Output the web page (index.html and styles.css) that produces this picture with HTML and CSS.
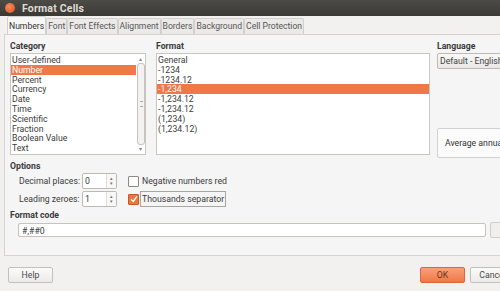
FILE: index.html
```html
<!DOCTYPE html>
<html lang="en">
<head>
    <meta charset="UTF-8">
    <title>Format Cells</title>
    <link rel="stylesheet" href="styles.css">
</head>
<body>
    <div class="titlebar">
        <span class="close-dot"></span>
        <span class="title">Format Cells</span>
    </div>
    <div class="window">
        <div class="tabs">
            <div class="tab active">Numbers</div>
            <div class="tab">Font</div>
            <div class="tab">Font Effects</div>
            <div class="tab">Alignment</div>
            <div class="tab">Borders</div>
            <div class="tab">Background</div>
            <div class="tab">Cell Protection</div>
        </div>
        <div class="panel">
            <div class="top-row">
                <div class="col col-category">
                    <div class="section-label">Category</div>
                    <div class="listbox">
                        <div class="items">
                            <div class="item">User-defined</div>
                            <div class="item selected">Number</div>
                            <div class="item">Percent</div>
                            <div class="item">Currency</div>
                            <div class="item">Date</div>
                            <div class="item">Time</div>
                            <div class="item">Scientific</div>
                            <div class="item">Fraction</div>
                            <div class="item">Boolean Value</div>
                            <div class="item">Text</div>
                        </div>
                        <div class="scrollbar">
                            <span class="arrow">&#9652;</span>
                            <div class="thumb"><span class="grip"></span></div>
                            <span class="arrow">&#9662;</span>
                        </div>
                    </div>
                </div>
                <div class="col col-format">
                    <div class="section-label">Format</div>
                    <div class="listbox">
                        <div class="items">
                            <div class="item">General</div>
                            <div class="item">-1234</div>
                            <div class="item">-1234.12</div>
                            <div class="item selected">-1,234</div>
                            <div class="item">-1,234.12</div>
                            <div class="item">-1,234.12</div>
                            <div class="item">(1,234)</div>
                            <div class="item">(1,234.12)</div>
                        </div>
                    </div>
                </div>
                <div class="col col-language">
                    <div class="section-label">Language</div>
                    <div class="dropdown">Default - English (USA)</div>
                    <div class="preview">Average annual</div>
                </div>
            </div>

            <div class="section-label options-label">Options</div>
            <div class="option-row">
                <span class="opt-label">Decimal places:</span>
                <div class="spin">
                    <span class="spin-value">0</span>
                    <span class="spin-btns"><span>&#9652;</span><span>&#9662;</span></span>
                </div>
                <span class="check"></span>
                <span class="check-text">Negative numbers red</span>
            </div>
            <div class="option-row">
                <span class="opt-label">Leading zeroes:</span>
                <div class="spin">
                    <span class="spin-value">1</span>
                    <span class="spin-btns"><span>&#9652;</span><span>&#9662;</span></span>
                </div>
                <span class="check checked">
                    <svg width="8" height="8" viewBox="0 0 8 8"><path d="M1 4.2 L3.2 6.4 L7 1.4" fill="none" stroke="#fff" stroke-width="1.4"/></svg>
                </span>
                <span class="check-text focused">Thousands separator</span>
            </div>

            <div class="section-label code-label">Format code</div>
            <div class="code-row">
                <div class="code-input">#,##0</div>
                <div class="code-btn"></div>
            </div>
        </div>
        <div class="footer">
            <button class="btn">Help</button>
            <div class="footer-right">
                <button class="btn btn-ok">OK</button>
                <button class="btn">Cancel</button>
            </div>
        </div>
    </div>
</body>
</html>
```

FILE: styles.css
```css
body {
    margin: 0;
    width: 500px;
    height: 291px;
    overflow: hidden;
    background-color: #f2f1f0;
    font-family: 'Roboto', 'Noto Sans', sans-serif;
    font-size: 8.7px;
    color: #3c3c3c;
}
.titlebar {
    height: 16px;
    background: linear-gradient(#4c4b46, #3a3935);
    display: flex;
    align-items: center;
    padding-left: 5px;
}
.close-dot {
    width: 10px;
    height: 10px;
    border-radius: 50%;
    background: radial-gradient(circle at 40% 35%, #f78a5e, #e0501e);
    margin-right: 7px;
}
.title {
    color: #dfdbd2;
    font-weight: bold;
    font-size: 10.5px;
    letter-spacing: 0.2px;
}
.window {
    padding: 1px 0 0 4px;
    overflow: hidden;
}
.tabs {
    display: flex;
    height: 17px;
    margin-left: 3px;
    align-items: flex-end;
}
.tab {
    height: 15px;
    line-height: 15px;
    padding: 0 1px;
    border: 1px solid #d2d0cc;
    border-bottom: none;
    border-radius: 2px 2px 0 0;
    background: #eceae8;
    color: #555;
    font-size: 8.6px;
    white-space: nowrap;
}
.tab.active {
    height: 17px;
    line-height: 18px;
    background: #f6f6f5;
    color: #333;
}
.panel {
    width: 520px;
    height: 222px;
    border: 1px solid #d6d4d0;
    background: #f5f5f5;
    box-sizing: border-box;
    padding: 5px 0 0 5px;
}
.section-label {
    font-weight: bold;
    height: 12px;
    line-height: 12px;
    margin-bottom: 1px;
    color: #3a3a3a;
}
.top-row {
    display: flex;
}
.col-category {
    flex: 0 0 136px;
    margin-right: 10px;
}
.col-format {
    flex: 0 0 274px;
    margin-right: 7px;
}
.col-language {
    flex: 1;
    min-width: 0;
}
.listbox {
    height: 102px;
    background: #fff;
    border: 1px solid #c9c6c2;
    box-sizing: border-box;
    display: flex;
}
.items {
    flex: 1;
    padding-top: 1px;
}
.item {
    height: 9.8px;
    line-height: 10px;
    padding-left: 1px;
    color: #3c3c3c;
    white-space: nowrap;
}
.item.selected {
    background: #f07746;
    color: #fff;
}
.scrollbar {
    width: 9px;
    display: flex;
    flex-direction: column;
    align-items: center;
    padding: 2px 0;
    box-sizing: border-box;
}
.arrow {
    font-size: 6px;
    line-height: 6px;
    height: 6px;
    color: #888;
}
.thumb {
    flex: 1;
    width: 6px;
    margin: 1px 0;
    border: 1px solid #c6c3bf;
    border-radius: 3px;
    background: #f3f2f1;
    display: flex;
    align-items: center;
    justify-content: center;
}
.grip {
    width: 2px;
    height: 4px;
    border-top: 1px dotted #aaa;
    border-bottom: 1px dotted #aaa;
}
.dropdown {
    height: 14px;
    line-height: 14px;
    padding-left: 2px;
    border: 1px solid #bdbab5;
    border-radius: 2px;
    background: linear-gradient(#f8f8f7, #e9e8e6);
    white-space: nowrap;
    overflow: hidden;
    color: #444;
}
.preview {
    margin-top: 59px;
    height: 28px;
    line-height: 28px;
    padding-left: 7px;
    border: 1px solid #d3d1cd;
    border-radius: 2px;
    background: #fbfbfb;
    white-space: nowrap;
    overflow: hidden;
    color: #333;
}
.options-label {
    margin-top: 2px;
    margin-bottom: 1px;
}
.option-row {
    display: flex;
    align-items: center;
    height: 16px;
    margin-bottom: 2px;
}
.opt-label {
    width: 72px;
    box-sizing: border-box;
    padding-left: 9px;
    white-space: nowrap;
}
.spin {
    width: 35px;
    height: 16px;
    border: 1px solid #bdbab5;
    border-radius: 2px;
    box-sizing: border-box;
    display: flex;
    background: #fff;
}
.spin-value {
    flex: 1;
    line-height: 14px;
    padding-left: 2px;
}
.spin-btns {
    width: 9px;
    display: flex;
    flex-direction: column;
    justify-content: center;
    align-items: center;
    font-size: 5px;
    line-height: 5px;
    color: #777;
    background: #f7f7f6;
    border-left: 1px solid #e0dedb;
}
.check {
    width: 9px;
    height: 9px;
    margin-left: 11px;
    margin-right: 1px;
    border: 1px solid #8d8a85;
    border-radius: 1px;
    background: #fff;
    display: flex;
    align-items: center;
    justify-content: center;
}
.check.checked {
    background: #ee7443;
    border-color: #c9572a;
}
.check-text {
    padding: 0 1px;
    height: 14px;
    line-height: 14px;
    border: 1px solid transparent;
    white-space: nowrap;
}
.check-text.focused {
    border-color: #a9a6a1;
}
.code-label {
    margin-top: 2px;
    margin-bottom: 1px;
}
.code-row {
    display: flex;
    align-items: center;
}
.code-input {
    margin-left: 8px;
    width: 468px;
    height: 14px;
    line-height: 14px;
    padding-left: 3px;
    border: 1px solid #c6c3bf;
    border-radius: 2px;
    background: #fff;
    box-sizing: border-box;
}
.code-btn {
    margin-left: 4px;
    width: 16px;
    height: 14px;
    border: 1px solid #d0ceca;
    border-radius: 2px;
    background: #f0efed;
}
.footer {
    display: flex;
    justify-content: space-between;
    padding: 11px 0 0 4px;
}
.footer-right {
    display: flex;
    gap: 5px;
    margin-right: -15px;
}
.btn {
    width: 45px;
    height: 16px;
    padding: 0;
    font-family: 'Roboto', 'Noto Sans', sans-serif;
    font-size: 8.7px;
    color: #4a4a4a;
    border: 1px solid #c3c0bb;
    border-radius: 2px;
    background: linear-gradient(#fbfbfa, #ebeae8);
    white-space: nowrap;
    overflow: hidden;
}
.btn-ok {
    background: linear-gradient(#f9a07a, #f07746);
    border-color: #d9683c;
    color: #6b3520;
}
```
